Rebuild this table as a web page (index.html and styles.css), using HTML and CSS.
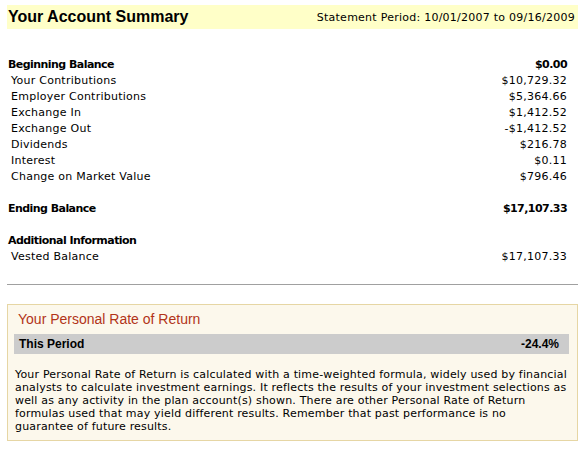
FILE: index.html
```html
<!DOCTYPE html>
<html>
<head>
<meta charset="utf-8">
<link rel="stylesheet" href="styles.css">
</head>
<body>
<div class="page">
  <div class="header">
    <h1 class="title">Your Account Summary</h1>
    <div class="period">Statement Period: 10/01/2007 to 09/16/2009</div>
  </div>
  <div class="summary">
    <div class="row strong"><span>Beginning Balance</span><span>$0.00</span></div>
    <div class="row sub"><span>Your Contributions</span><span>$10,729.32</span></div>
    <div class="row sub"><span>Employer Contributions</span><span>$5,364.66</span></div>
    <div class="row sub"><span>Exchange In</span><span>$1,412.52</span></div>
    <div class="row sub"><span>Exchange Out</span><span>-$1,412.52</span></div>
    <div class="row sub"><span>Dividends</span><span>$216.78</span></div>
    <div class="row sub"><span>Interest</span><span>$0.11</span></div>
    <div class="row sub"><span>Change on Market Value</span><span>$796.46</span></div>
    <div class="row blank"></div>
    <div class="row strong"><span>Ending Balance</span><span>$17,107.33</span></div>
    <div class="row blank"></div>
    <div class="row strong"><span>Additional Information</span><span></span></div>
    <div class="row sub"><span>Vested Balance</span><span>$17,107.33</span></div>
  </div>
  <div class="divider"></div>
  <div class="ror">
    <div class="ror-title">Your Personal Rate of Return</div>
    <div class="ror-bar"><span>This Period</span><span>-24.4%</span></div>
    <p class="ror-text">Your Personal Rate of Return is calculated with a time-weighted formula, widely used by financial analysts to calculate investment earnings. It reflects the results of your investment selections as well as any activity in the plan account(s) shown. There are other Personal Rate of Return formulas used that may yield different results. Remember that past performance is no<br>guarantee of future results.</p>
  </div>
</div>
</body>
</html>
```
FILE: styles.css
```css
html, body {
  margin: 0;
  padding: 0;
  background: #ffffff;
}
body {
  font-family: "DejaVu Sans", Verdana, sans-serif;
  font-size: 11px;
  letter-spacing: 0.25px;
  color: #000;
}
.page {
  width: 571px;
  padding: 5px 0 0 7px;
}
.header {
  height: 24px;
  background: #ffffc8;
  display: flex;
  align-items: center;
  justify-content: space-between;
  padding: 0 3px 0 1px;
}
.title {
  margin: 0;
  font-family: "Liberation Sans", Arial, sans-serif;
  font-size: 16px;
  font-weight: bold;
  line-height: 20px;
  letter-spacing: 0;
}
.period {
  font-size: 11px;
}
.summary {
  margin-top: 28px;
  padding-right: 11px;
}
.row {
  height: 16px;
  line-height: 16px;
  display: flex;
  justify-content: space-between;
}
.row.strong {
  font-weight: bold;
  padding-left: 1px;
  letter-spacing: -0.55px;
}
.row.sub {
  padding-left: 4px;
}
.divider {
  margin-top: 19px;
  height: 1px;
  background: #a0a0a0;
}
.ror {
  margin-top: 19px;
  border: 1px solid #e6d6a4;
  background: #fcf8ec;
  padding: 6px 8px 0 6px;
  height: 129px;
}
.ror-title {
  font-family: "Liberation Sans", Arial, sans-serif;
  font-size: 14px;
  color: #b23418;
  line-height: 16px;
  padding-left: 4px;
  letter-spacing: 0;
}
.ror-bar {
  margin-top: 7px;
  height: 20px;
  background: #cccccc;
  display: flex;
  align-items: center;
  justify-content: space-between;
  padding: 0 10px 0 5px;
  font-family: "Liberation Sans", Arial, sans-serif;
  font-size: 12px;
  font-weight: bold;
  letter-spacing: 0;
}
.ror-text {
  margin: 14px -5px 0 1px;
  line-height: 13px;
  letter-spacing: 0.18px;
}
```
